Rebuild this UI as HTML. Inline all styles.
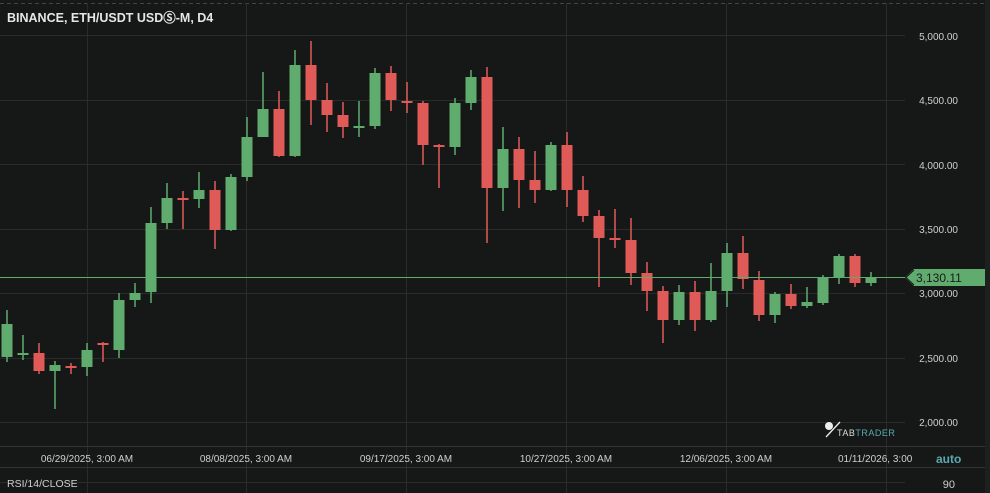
<!DOCTYPE html>
<html><head><meta charset="utf-8"><style>
html,body{margin:0;padding:0;background:#161818;width:990px;height:493px;overflow:hidden}
svg{display:block}
text{font-family:"Liberation Sans",sans-serif}
</style></head><body>
<svg width="990" height="493" viewBox="0 0 990 493" xmlns="http://www.w3.org/2000/svg">
<rect width="990" height="493" fill="#161818"/>
<rect x="985" y="0" width="5" height="493" fill="#1e2020"/>
<line x1="0" y1="3.5" x2="985" y2="3.5" stroke="#444" stroke-dasharray="4,3"/>
<g stroke="#2a2c2c" stroke-width="1">
<line x1="0" y1="35.5" x2="905" y2="35.5"/><line x1="0" y1="100.5" x2="905" y2="100.5"/>
<line x1="0" y1="164.5" x2="905" y2="164.5"/><line x1="0" y1="229.5" x2="905" y2="229.5"/>
<line x1="0" y1="293.5" x2="905" y2="293.5"/><line x1="0" y1="358.5" x2="905" y2="358.5"/>
<line x1="0" y1="422.5" x2="905" y2="422.5"/>
<line x1="87.5" y1="3" x2="87.5" y2="493"/><line x1="246.5" y1="3" x2="246.5" y2="493"/>
<line x1="406.5" y1="3" x2="406.5" y2="493"/><line x1="566.5" y1="3" x2="566.5" y2="493"/>
<line x1="726.5" y1="3" x2="726.5" y2="493"/><line x1="886.5" y1="3" x2="886.5" y2="493"/>
<line x1="0" y1="446.5" x2="985" y2="446.5" stroke="#333"/>
<line x1="0" y1="467.5" x2="985" y2="467.5" stroke="#333"/>
<line x1="0" y1="482.5" x2="905" y2="482.5"/>
</g>
<g id="c"></g>
<line x1="0" y1="277.5" x2="905" y2="277.5" stroke="#5fac6e" stroke-width="1"/>
<path d="M905 277.5 L914 269 L985 269 L985 286 L914 286 Z" fill="#5fac6e"/>
<path d="M914 270 L906 277.5 L914 285" fill="none" stroke="#161818" stroke-width="1"/>
<text x="916" y="282" font-size="12" fill="#1a1a1a">3,130.11</text>
<g font-size="10" fill="#cfcfcf" text-anchor="end">
<text x="958" y="40">5,000.00</text><text x="958" y="104">4,500.00</text>
<text x="958" y="169">4,000.00</text><text x="958" y="233">3,500.00</text>
<text x="958" y="297">3,000.00</text><text x="958" y="362">2,500.00</text>
<text x="958" y="426">2,000.00</text><text x="955" y="488" font-size="11">90</text>
</g>
<text x="7" y="22" font-size="12.5" font-weight="bold" fill="#e6e6e6">BINANCE, ETH/USDT USDⓈ-M, D4</text>
<g font-size="10" fill="#cfcfcf" text-anchor="middle">
<text x="87" y="462">06/29/2025, 3:00 AM</text><text x="246" y="462">08/08/2025, 3:00 AM</text>
<text x="406" y="462">09/17/2025, 3:00 AM</text><text x="566" y="462">10/27/2025, 3:00 AM</text>
<text x="726" y="462">12/06/2025, 3:00 AM</text>
</g>
<rect x="912" y="448" width="73" height="18" fill="#161818"/>
<text x="838" y="462" font-size="10" fill="#cfcfcf">01/11/2026, 3:00</text>
<rect x="913" y="448" width="72" height="18" fill="#161818"/>
<text x="936" y="463" font-size="12" font-weight="bold" fill="#5aaab0">auto</text>
<text x="7" y="487" font-size="10.5" fill="#cfcfcf">RSI/14/CLOSE</text>
<circle cx="829" cy="426" r="4" fill="#eee"/>
<line x1="826" y1="437" x2="840" y2="422" stroke="#eee" stroke-width="1.3"/>
<text x="837" y="436" font-size="9" fill="#ddd" letter-spacing=".5">TAB<tspan fill="#5aaab0">TRADER</tspan></text>
</svg>
<script>
var d=[[357,324,310,362],[353,353,335,360],[353,371,343,374],[371,365,361,409],[366,366,363,374],[367,350,343,376],[343,345,342,362],[350,300,293,358],[300,293,283,307],[292,223,207,303],[223,198,183,229],[198,198,191,229],[199,190,172,208],[190,230,181,249],[230,177,174,231],[177,137,117,181],[137,109,72,137],[109,156,91,157],[156,65,50,157],[65,100,41,125],[100,115,83,132],[115,127,102,138],[126,126,101,137],[126,73,68,129],[73,100,66,111],[101,103,82,113],[103,145,101,165],[145,147,144,188],[147,103,98,155],[103,77,70,110],[77,188,67,243],[188,149,127,211],[149,180,137,208],[180,190,151,203],[190,145,142,191],[145,190,132,207],[190,216,176,222],[216,238,210,287],[238,240,209,248],[240,273,218,285],[273,291,262,311],[291,320,286,343],[320,292,285,325],[292,320,281,331],[320,291,263,322],[291,253,243,307],[253,279,236,289],[280,315,271,321],[315,294,292,323],[294,306,284,309],[306,302,287,308],[303,278,275,305],[278,256,254,284],[256,283,254,287],[283,277,272,286]];
var g=document.getElementById('c'),s='';
d.forEach(function(c,i){var x=7+16*i,o=c[0],cl=c[1],up=cl<o||(cl==o&&[1,3,5,22].indexOf(i)>=0&&true);
if(cl<o)up=true;else if(cl>o)up=false;
var col=up?'#5fac6e':'#e05a57',t=Math.min(o,cl),h=Math.max(Math.abs(o-cl),2);
s+='<line x1="'+x+'" y1="'+c[2]+'" x2="'+x+'" y2="'+c[3]+'" stroke="'+col+'" stroke-width="1.5"/>';
s+='<rect x="'+(x-5.5)+'" y="'+t+'" width="11" height="'+h+'" fill="'+col+'"/>';});
g.innerHTML=s;
</script>
</body></html>
